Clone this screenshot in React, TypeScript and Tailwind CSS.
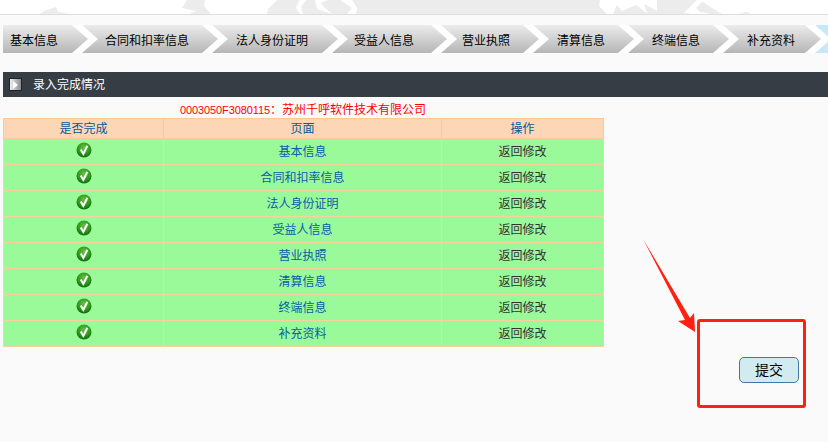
import React from "react";

const font = { fontFamily: '"Liberation Sans", "Noto Sans CJK SC", sans-serif' };

const notch =
  "[clip-path:polygon(0_0,calc(100%-16px)_0,100%_50%,calc(100%-16px)_100%,0_100%,16px_50%)]";

const steps = [
  { label: "基本信息", box: "w-[85px] pl-[7px] [clip-path:polygon(0_0,calc(100%-16px)_0,100%_50%,calc(100%-16px)_100%,0_100%)]" },
  { label: "合同和扣率信息", box: `w-[136px] pl-[23px] -ml-[6px] ${notch}` },
  { label: "法人身份证明", box: `w-[126px] pl-[24px] -ml-[6px] ${notch}` },
  { label: "受益人信息", box: `w-[115px] pl-[22px] -ml-[6px] ${notch}` },
  { label: "营业执照", box: `w-[98px] pl-[21px] -ml-[6px] ${notch}` },
  { label: "清算信息", box: `w-[101px] pl-[24px] -ml-[6px] ${notch}` },
  { label: "终端信息", box: `w-[101px] pl-[24px] -ml-[6px] ${notch}` },
  { label: "补充资料", box: `w-[98px] pl-[24px] -ml-[6px] ${notch}` },
];

const rows = ["基本信息", "合同和扣率信息", "法人身份证明", "受益人信息", "营业执照", "清算信息", "终端信息", "补充资料"];

const Watermark = () => (
  <svg width="828" height="14" className="block">
    <polygon fill="#ececec" points="187,0 182,8 196,11 187,15 194,14 203,14 211,14 267,14 277,0" />
    <polygon fill="#ececec" points="277,0 267,14 300,14 295,10 298,0" />
    <polygon fill="#ffffff" points="205,0 204,6 211,14 267,14 268,9 277,0" />
    <polygon fill="#ececec" points="298,0 295,10 300,14 712,14 722,14 712,8 700,0" />
    <polygon fill="#ffffff" points="300,0 296,8 300,14 303,14 301,7 306,0" />
    <polygon fill="#ffffff" points="315,0 317,9 332,14 325,8 321,3 328,0" />
    <polygon fill="#ffffff" points="340,0 352,8 347,14 356,14 357,8 352,0" />
    <polygon fill="#ffffff" points="600,0 599,6 607,14 613,14 617,5 622,11 636,5 647,13 644,4 657,11 657,0" />
    <polygon fill="#ffffff" points="684,13 692,5 697,0 704,0 696,8 700,12 712,14 690,14" />
    <polygon fill="#ececec" points="40,14 44,11 56,7 58,12 70,14" />
    <polygon fill="#ececec" points="738,14 746,12 752,14" />
  </svg>
);

const CheckIcon = () => (
  <svg width="16" height="16" viewBox="0 0 16 16" className="block mx-auto -mt-[3px]">
    <defs>
      <radialGradient id="ball" cx="50%" cy="35%" r="65%">
        <stop offset="0%" stopColor="#6cc04a" />
        <stop offset="60%" stopColor="#2f9a1c" />
        <stop offset="100%" stopColor="#0f6a0c" />
      </radialGradient>
    </defs>
    <circle cx="8" cy="8" r="7.5" fill="url(#ball)" />
    <path d="M4.8 7.6 L7.3 12 L11.4 3.8" fill="none" stroke="#ffffff" strokeWidth="2" />
  </svg>
);

export default function App() {
  return (
    <div className="relative w-[828px] h-[442px] overflow-hidden bg-[#fafafa] text-xs" style={font}>
      {/* Top banner */}
      <div className="h-[15px] bg-white border-b border-[#dddddd]">
        <Watermark />
      </div>

      {/* Steps */}
      <div className="flex h-7 mt-[10px] ml-[3px] bg-white overflow-hidden">
        {steps.map((s) => (
          <div
            key={s.label}
            className={`shrink-0 flex items-center pt-[3px] text-black bg-gradient-to-b from-[#ececec] to-[#b6b6b6] ${s.box}`}
          >
            {s.label}
          </div>
        ))}
        <div className={`shrink-0 w-[60px] -ml-[6px] bg-[#c8e8f8] ${notch}`} />
      </div>

      {/* Section title */}
      <div className="flex items-center h-[25px] mt-[19px] ml-[3px] bg-[#363d45] text-white">
        <span className="flex items-center justify-center w-[13px] h-[13px] ml-[6px] mr-[11px] border border-[#222] bg-gradient-to-r from-[#f0f0f0] to-[#8a8a8a]">
          <span className="w-0 h-0 border-y-[4px] border-y-transparent border-l-[5px] border-l-white" />
        </span>
        录入完成情况
      </div>

      {/* Merchant */}
      <div className="h-[21px] pl-[180px] pt-[5px] leading-[16px] text-[#ff0000] whitespace-nowrap">
        <span className="text-[11px] tracking-[-0.1px]">0003050F3080115</span>：苏州千呼软件技术有限公司
      </div>

      {/* Status table */}
      <table className="ml-[3px] w-[600px] table-fixed border-collapse text-center">
        <colgroup>
          <col className="w-[160px]" />
          <col className="w-[278px]" />
          <col className="w-[162px]" />
        </colgroup>
        <thead>
          <tr className="h-5 bg-[#fdd7b5] text-[#005a9c]">
            <th className="font-normal border border-[#fdc796]">是否完成</th>
            <th className="font-normal border border-[#fdc796]">页面</th>
            <th className="font-normal border border-[#fdc796]">操作</th>
          </tr>
        </thead>
        <tbody>
          {rows.map((r) => (
            <tr key={r} className="h-[26px] bg-[#9afa9a]">
              <td className="border border-[#fdd0a0] p-0">
                <CheckIcon />
              </td>
              <td className="border border-[#fdd0a0] p-0 text-[#0a5ca8]">{r}</td>
              <td className="border border-[#fdd0a0] p-0 text-[#333333]">返回修改</td>
            </tr>
          ))}
        </tbody>
      </table>

      {/* Submit */}
      <div className="flex justify-end pr-[29px] mt-[10px]">
        <button className="w-[60px] h-[26px] rounded-[5px] border border-[#3f78a4] bg-[#d2ebf0] text-sm text-black">
          提交
        </button>
      </div>

      {/* Red annotation over the page */}
      <div className="absolute left-[697px] top-[319px] w-[109px] h-[89px] rounded-[3px] border-[3px] border-[#ff2012]" />
      <svg className="absolute left-[640px] top-[235px]" width="60" height="100">
        <polygon fill="#ff2012" points="3,4 50,83 54,78 55,97 38,86 45,85" />
      </svg>
    </div>
  );
}
